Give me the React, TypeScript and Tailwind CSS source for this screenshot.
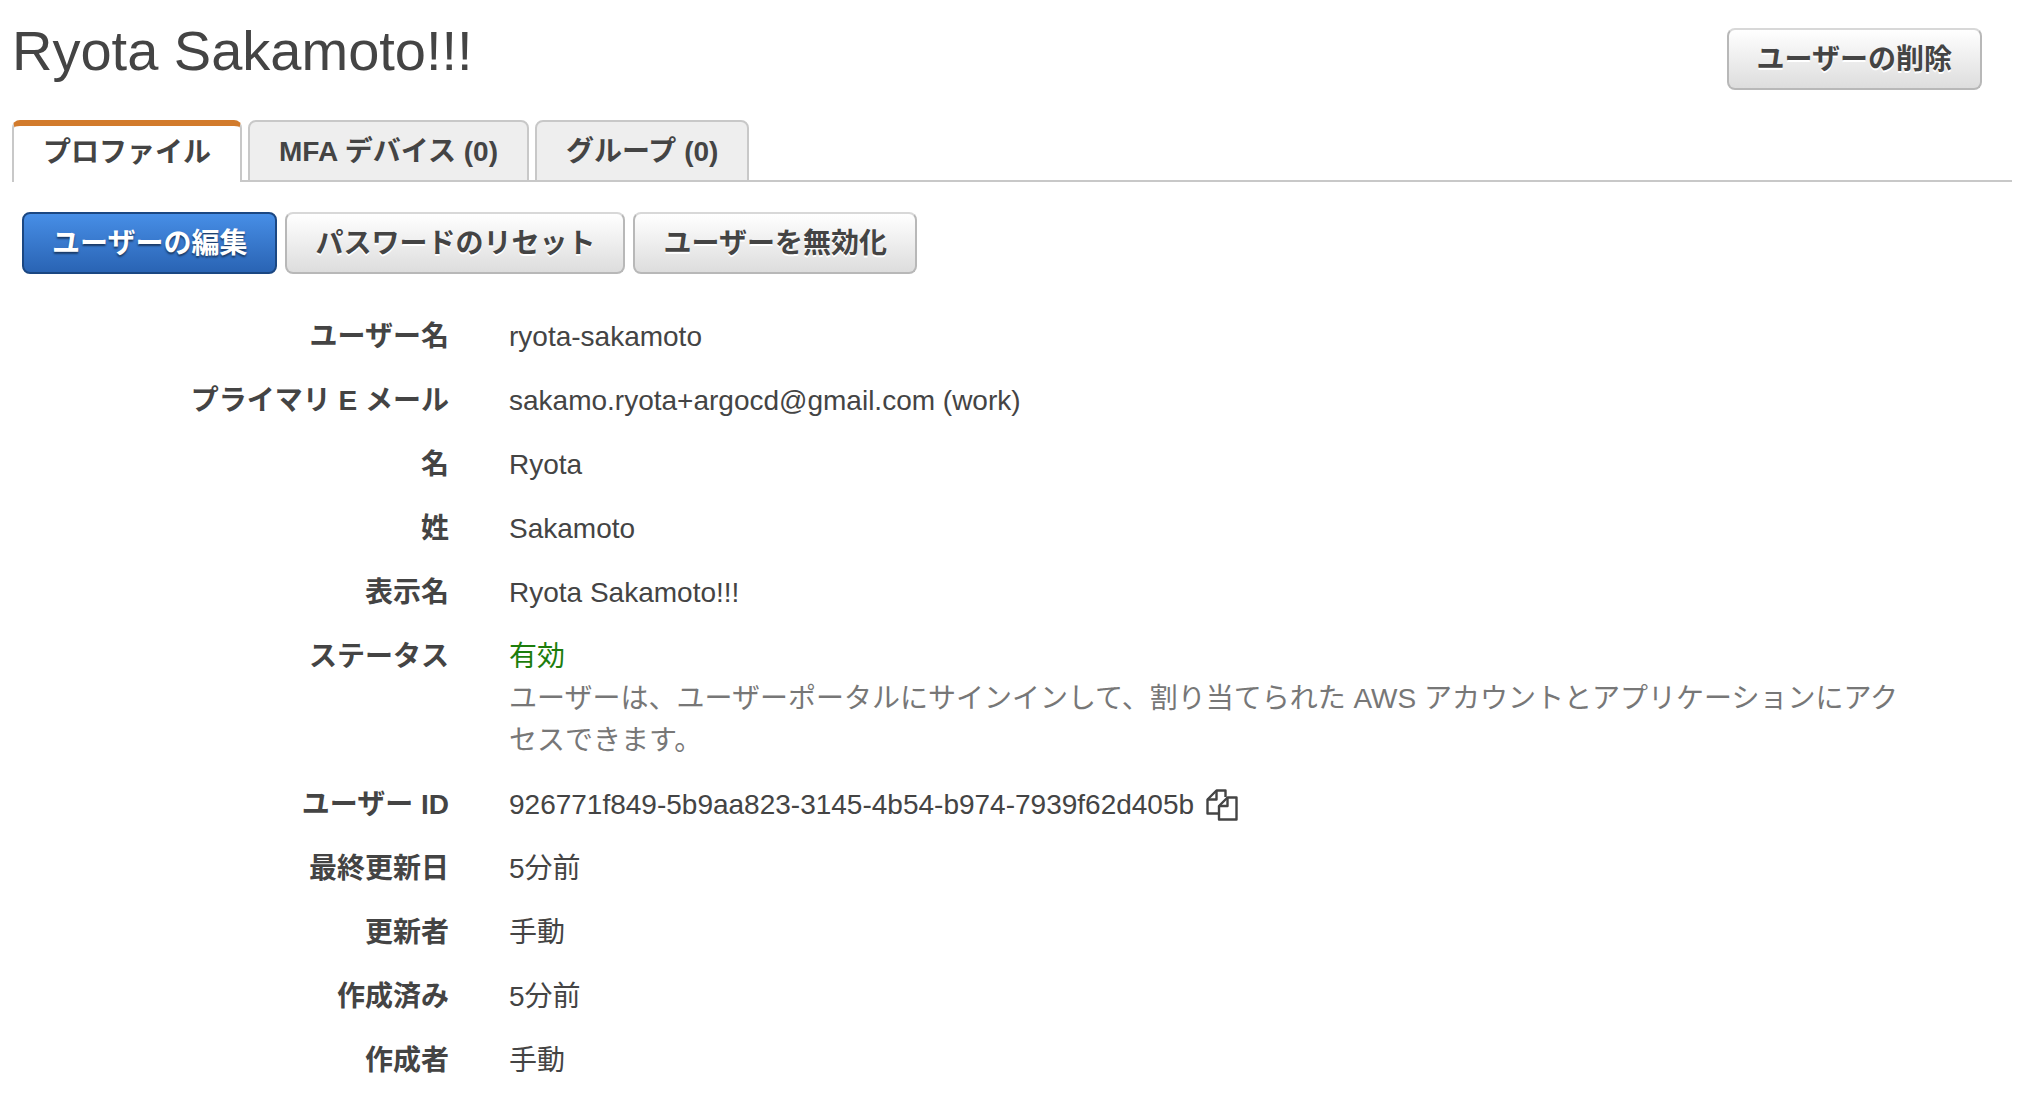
import { useState } from "react";
import type { ReactNode } from "react";

type ProfileRow = {
  label: string;
  value: ReactNode;
};

type ActionButtonProps = {
  children: ReactNode;
  primary?: boolean;
};

const USER_ID = "926771f849-5b9aa823-3145-4b54-b974-7939f62d405b";

const TABS: readonly string[] = ["プロファイル", "MFA デバイス (0)", "グループ (0)"];

function CopyIcon() {
  return (
    <svg
      viewBox="0 0 32 32"
      className="h-8 w-8"
      fill="none"
      stroke="currentColor"
      strokeWidth="2.4"
      strokeLinejoin="round"
      aria-hidden="true"
    >
      <path d="M13 24.5H1.5V10.5L10.5 1.5H19.5V8" />
      <path d="M10.5 1.5V10.5H1.5" />
      <path d="M21.5 8.5H30.5V30.5H13V17Z" />
      <path d="M21.5 8.5V17H13" />
    </svg>
  );
}

function ActionButton({ children, primary }: ActionButtonProps) {
  return (
    <button
      type="button"
      className={`rounded-lg border-2 px-7 pt-[9px] pb-[7px] font-bold leading-[42px] ${
        primary
          ? "border-[#1b4782] bg-linear-to-b from-[#478ee6] to-[#2a64b4] text-white [text-shadow:0_2px_2px_#1a3a66]"
          : "border-[#b8b8b8] border-t-[#d8d8d8] bg-linear-to-b from-white to-[#dddddd] [text-shadow:0_2px_0_#ffffff]"
      }`}
    >
      {children}
    </button>
  );
}

const ROWS: readonly ProfileRow[] = [
  { label: "ユーザー名", value: "ryota-sakamoto" },
  { label: "プライマリ E メール", value: "sakamo.ryota+argocd@gmail.com (work)" },
  { label: "名", value: "Ryota" },
  { label: "姓", value: "Sakamoto" },
  { label: "表示名", value: "Ryota Sakamoto!!!" },
  {
    label: "ステータス",
    value: (
      <>
        <p className="text-[#1d7d0c]">有効</p>
        <p className="text-[#777777]">
          ユーザーは、ユーザーポータルにサインインして、割り当てられた AWS
          アカウントとアプリケーションにアクセスできます。
        </p>
      </>
    ),
  },
  {
    label: "ユーザー ID",
    value: (
      <span className="flex items-center gap-3">
        {USER_ID}
        <button
          type="button"
          aria-label="ユーザー ID をコピー"
          onClick={() => navigator.clipboard?.writeText(USER_ID)}
        >
          <CopyIcon />
        </button>
      </span>
    ),
  },
  { label: "最終更新日", value: "5分前" },
  { label: "更新者", value: "手動" },
  { label: "作成済み", value: "5分前" },
  { label: "作成者", value: "手動" },
];

export default function App() {
  const [activeTab, setActiveTab] = useState(TABS[0]);

  return (
    <main
      lang="ja"
      className="min-h-screen bg-white px-3 pb-3 font-['Liberation_Sans','Noto_Sans_CJK_JP',sans-serif] text-[28px] leading-[42px] text-[#444444]"
    >
      <header className="flex items-start justify-between pt-4 pr-[30px]">
        <h1 className="text-[56px] leading-[70px]">Ryota Sakamoto!!!</h1>
        <div className="flex pt-3">
          <ActionButton>ユーザーの削除</ActionButton>
        </div>
      </header>

      <div role="tablist" className="mt-[30px] flex gap-[6px] border-b-2 border-[#c8c8c8]">
        {TABS.map((tab) => (
          <button
            key={tab}
            type="button"
            role="tab"
            aria-selected={tab === activeTab}
            onClick={() => setActiveTab(tab)}
            className={`-mb-[2px] h-[62px] rounded-t-lg border-x-2 px-[29px] pb-[6px] font-bold ${
              tab === activeTab
                ? "border-t-6 border-x-[#c8c8c8] border-t-[#d27b2c] bg-white pt-1"
                : "border-y-2 border-[#c8c8c8] bg-[#eeeeee] pt-2"
            }`}
          >
            {tab}
          </button>
        ))}
      </div>

      <section className="pt-[30px]">
        <div className="flex flex-wrap gap-2 pl-[10px]">
          <ActionButton primary>ユーザーの編集</ActionButton>
          <ActionButton>パスワードのリセット</ActionButton>
          <ActionButton>ユーザーを無効化</ActionButton>
        </div>

        <dl className="mt-[42px] flex flex-col gap-[22px] pr-28">
          {ROWS.map((row) => (
            <div key={row.label} className="flex gap-[60px]">
              <dt className="w-[437px] shrink-0 text-right font-bold">{row.label}</dt>
              <dd className="min-w-0 flex-1">{row.value}</dd>
            </div>
          ))}
        </dl>
      </section>
    </main>
  );
}
